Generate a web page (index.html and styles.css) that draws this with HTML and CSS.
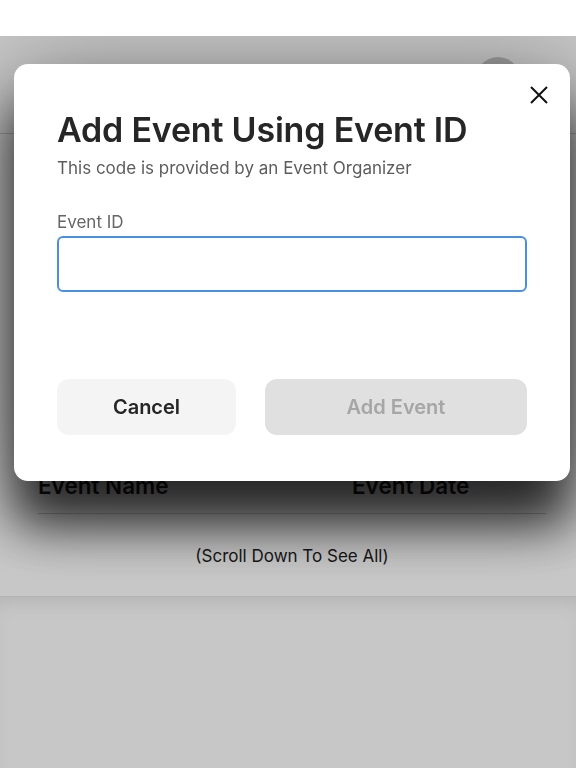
FILE: index.html
```html
<!DOCTYPE html>
<html lang="en">
<head>
    <meta charset="UTF-8">
    <title>My Events</title>
    <link rel="stylesheet" href="styles.css">
</head>
<body>
    <div class="statusBar"></div>

    <!-- page underneath the popup -->
    <main class="page">
        <header class="pageHeader">
            <span class="avatar"></span>
        </header>
        <section class="eventList">
            <div class="listHead">
                <span>Event Name</span>
                <span>Event Date</span>
            </div>
            <p class="scrollHint">(Scroll Down To See All)</p>
        </section>
        <footer class="pageFooter"></footer>
    </main>

    <article id="addEventModal" class="popup">
        <section class="modalContent">
            <button class="closeModal" aria-label="Close">
                <svg width="18" height="18" viewBox="0 0 18 18">
                    <path d="M1 1 L17 17 M17 1 L1 17" stroke="#111" stroke-width="2" fill="none"/>
                </svg>
            </button>
            <h1 class="modalTitle">Add Event Using Event ID</h1>
            <p class="modalSub">This code is provided by an Event Organizer</p>
            <form id="addEventForm">
                <label for="eventIdInput">Event ID</label>
                <input type="text" id="eventIdInput" name="eventIdInput" value="">
                <div class="modalButtons">
                    <button type="button" class="btnCancel">Cancel</button>
                    <button type="submit" class="btnAdd" disabled>Add Event</button>
                </div>
            </form>
        </section>
    </article>
</body>
</html>
```

FILE: styles.css
```css
body {
    margin: 0;
    background-color: #ffffff;
    font-family: Inter, "Noto Sans", sans-serif;
    color: #222;
}

.statusBar {
    height: 36px;
    background-color: #ffffff;
}

.page {
    background-color: #ffffff;
}
.pageHeader {
    height: 98px;
    border-bottom: 1px solid #d6d6d6;
    display: flex;
    justify-content: flex-end;
    padding: 21px 56px 0 0;
    box-sizing: border-box;
}
.avatar {
    width: 44px;
    height: 44px;
    border-radius: 50%;
    background-color: #c9c9c9;
}

.eventList {
    padding: 337px 30px 0 38px;
    height: 462px;
    box-sizing: border-box;
}
.listHead {
    display: grid;
    grid-template-columns: 314px 1fr;
    font-size: 22.5px;
    font-weight: 600;
    line-height: 30px;
    padding-bottom: 12px;
    border-bottom: 1px solid #cfcfcf;
    color: #1c1c1c;
}
.scrollHint {
    margin: 30px 0 0;
    text-align: center;
    font-size: 17px;
    line-height: 24px;
    color: #1c1c1c;
}
.pageFooter {
    height: 171px;
    background-color: #ffffff;
    border-top: 1px solid #e4e4e4;
    box-shadow: inset 0 14px 22px -12px rgba(0, 0, 0, 0.12);
}

.popup {
    position: fixed;
    top: 36px;
    left: 0;
    right: 0;
    bottom: 0;
    overflow: hidden;
    background-color: rgba(0, 0, 0, 0.22);
    padding: 28px 6px 0 14px;
}
.modalContent {
    position: relative;
    background-color: #ffffff;
    border-radius: 14px;
    height: 417px;
    box-sizing: border-box;
    padding: 44px 43px 0 43px;
    box-shadow: 0 44px 50px rgba(0, 0, 0, 0.75), 0 10px 90px rgba(0, 0, 0, 0.4);
}
.closeModal {
    position: absolute;
    top: 22px;
    right: 22px;
    border: none;
    background: none;
    padding: 0;
    width: 18px;
    height: 18px;
}

.modalTitle {
    margin: 0;
    font-size: 34px;
    font-weight: 600;
    line-height: 44px;
    color: #262626;
    letter-spacing: -0.2px;
}
.modalSub {
    margin: 4px 0 0;
    font-size: 17px;
    line-height: 24px;
    color: #5c5c5c;
}

#addEventForm label {
    display: block;
    margin-top: 30px;
    font-size: 17px;
    line-height: 24px;
    color: #666;
}
#addEventForm input {
    display: block;
    width: 100%;
    height: 56px;
    margin-top: 2px;
    box-sizing: border-box;
    border: 2px solid #4a90e2;
    border-radius: 6px;
    outline: none;
}

.modalButtons {
    display: flex;
    gap: 29px;
    margin-top: 87px;
}
.modalButtons button {
    height: 56px;
    border: none;
    border-radius: 12px;
    font-family: Inter, "Noto Sans", sans-serif;
    font-size: 20px;
    font-weight: 600;
}
.btnCancel {
    width: 179px;
    background-color: #f4f4f4;
    color: #262626;
}
.btnAdd {
    flex: 1;
    background-color: #e0e0e0;
    color: #a6a6a6;
}
```
